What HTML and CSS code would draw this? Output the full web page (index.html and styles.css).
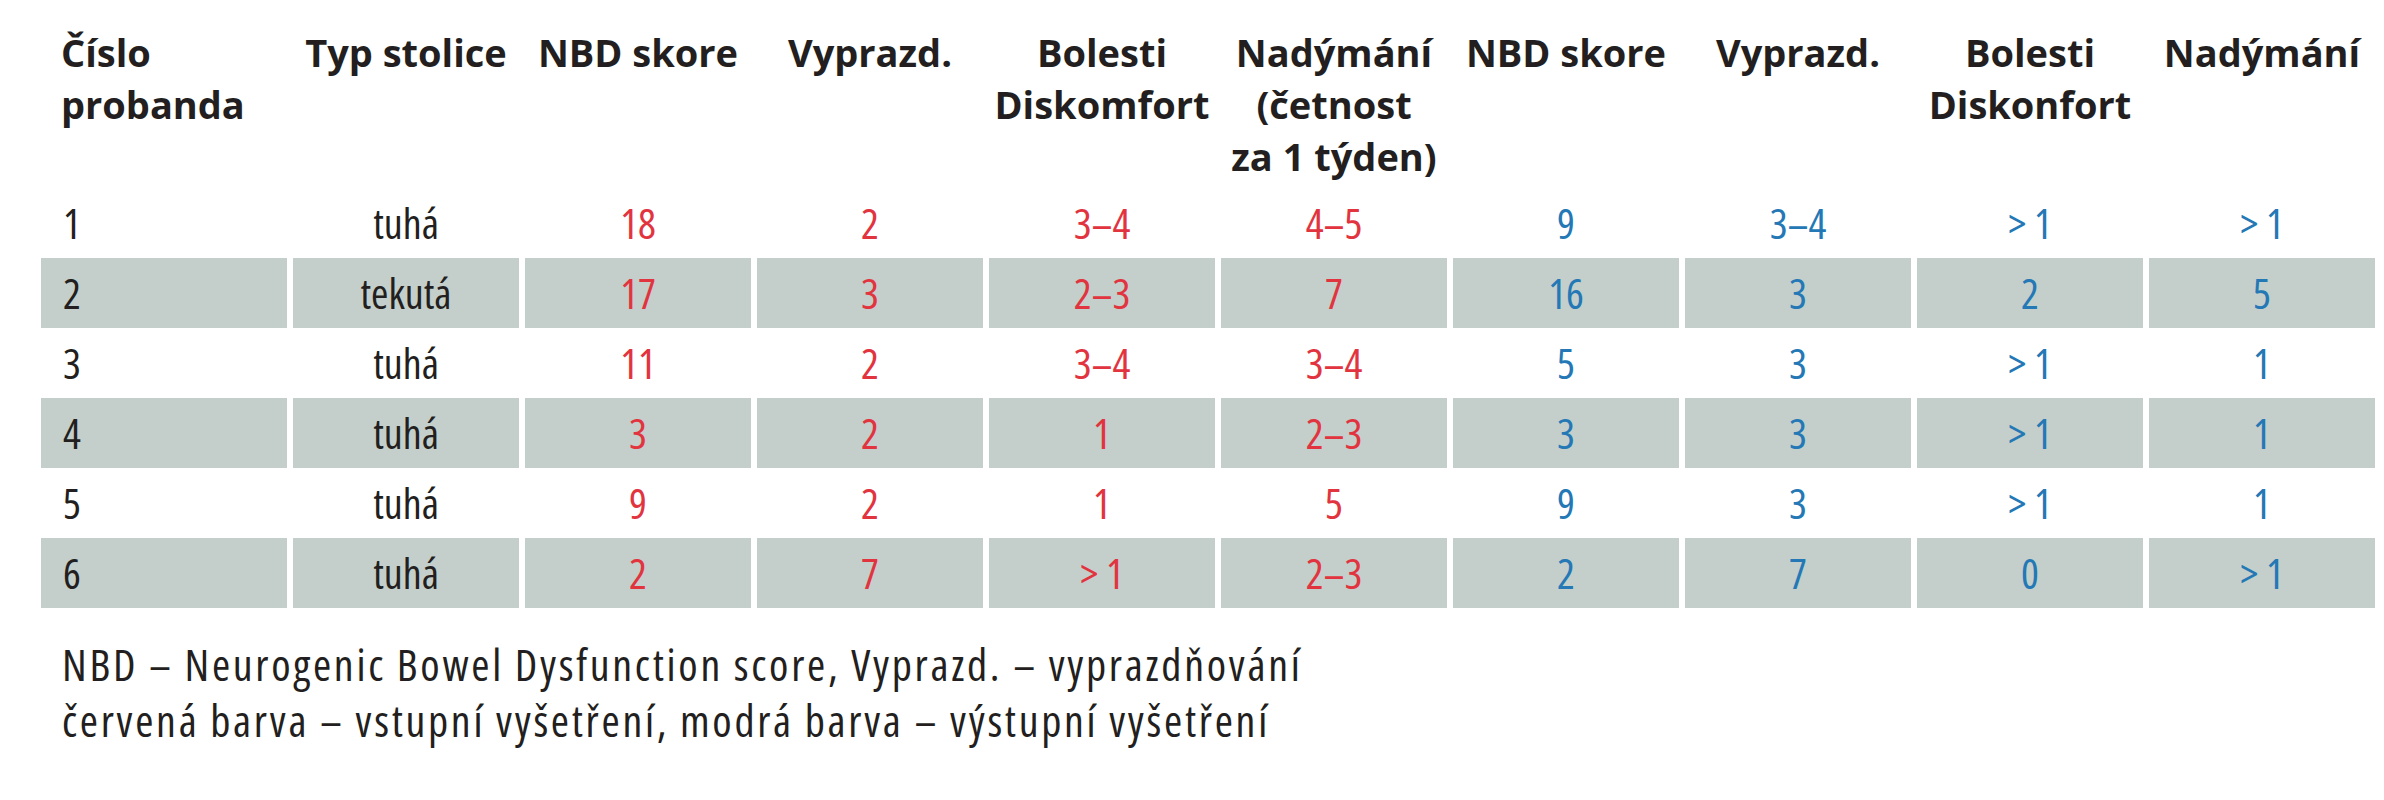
FILE: index.html
```html
<!DOCTYPE html>
<html lang="cs">
<head>
<meta charset="utf-8">
<title>Tabulka</title>
<link rel="stylesheet" href="styles.css">
</head>
<body>
<div class="page">
  <table class="data">
    <thead>
      <tr>
        <th class="first">Číslo<br>probanda</th>
        <th>Typ stolice</th>
        <th>NBD skore</th>
        <th>Vyprazd.</th>
        <th>Bolesti<br>Diskomfort</th>
        <th>Nadýmání<br>(četnost<br>za 1 týden)</th>
        <th>NBD skore</th>
        <th>Vyprazd.</th>
        <th>Bolesti<br>Diskonfort</th>
        <th>Nadýmání</th>
      </tr>
    </thead>
    <tbody>
      <tr>
        <td class="first">1</td><td>tuhá</td>
        <td class="in">18</td><td class="in">2</td><td class="in">3–4</td><td class="in">4–5</td>
        <td class="out">9</td><td class="out">3–4</td><td class="out">&gt; 1</td><td class="out">&gt; 1</td>
      </tr>
      <tr class="band">
        <td class="first">2</td><td>tekutá</td>
        <td class="in">17</td><td class="in">3</td><td class="in">2–3</td><td class="in">7</td>
        <td class="out">16</td><td class="out">3</td><td class="out">2</td><td class="out">5</td>
      </tr>
      <tr>
        <td class="first">3</td><td>tuhá</td>
        <td class="in">11</td><td class="in">2</td><td class="in">3–4</td><td class="in">3–4</td>
        <td class="out">5</td><td class="out">3</td><td class="out">&gt; 1</td><td class="out">1</td>
      </tr>
      <tr class="band">
        <td class="first">4</td><td>tuhá</td>
        <td class="in">3</td><td class="in">2</td><td class="in">1</td><td class="in">2–3</td>
        <td class="out">3</td><td class="out">3</td><td class="out">&gt; 1</td><td class="out">1</td>
      </tr>
      <tr>
        <td class="first">5</td><td>tuhá</td>
        <td class="in">9</td><td class="in">2</td><td class="in">1</td><td class="in">5</td>
        <td class="out">9</td><td class="out">3</td><td class="out">&gt; 1</td><td class="out">1</td>
      </tr>
      <tr class="band">
        <td class="first">6</td><td>tuhá</td>
        <td class="in">2</td><td class="in">7</td><td class="in">&gt; 1</td><td class="in">2–3</td>
        <td class="out">2</td><td class="out">7</td><td class="out">0</td><td class="out">&gt; 1</td>
      </tr>
    </tbody>
  </table>
  <div class="notes">
    <p>NBD – Neurogenic Bowel Dysfunction score, Vyprazd. – vyprazdňování</p>
    <p>červená barva – vstupní vyšetření, modrá barva – výstupní vyšetření</p>
  </div>
</div>
</body>
</html>
```
FILE: styles.css
```css
html, body {
  margin: 0;
  padding: 0;
  background: #ffffff;
}

.page {
  padding: 26px 0 0 35px;
  font-family: "Open Sans", "Noto Sans", sans-serif;
  color: #231f20;
}

.data {
  border-collapse: separate;
  border-spacing: 6px 0;
  table-layout: fixed;
  width: 2326px;
}

.data th {
  width: 226px;
  padding: 0 0 6px;
  vertical-align: top;
  text-align: center;
  font-size: 38px;
  font-weight: 700;
  line-height: 52px;
  color: #231f20;
}

.data td {
  height: 70px;
  padding: 0;
  vertical-align: middle;
  text-align: center;
  font-size: 42px;
  font-weight: 400;
  font-stretch: 75%;
  line-height: 56px;
  color: #231f20;
}

.data th.first,
.data td.first {
  text-align: left;
  padding-left: 20px;
}

.data td.first {
  padding-left: 22px;
}

.data td.in {
  color: #e2343f;
}

.data td.out {
  color: #2378b5;
}

.data tr.band td {
  background: #c4cfcb;
}

.notes {
  margin: 28px 0 0 27px;
  font-size: 44px;
  font-stretch: 75%;
  letter-spacing: 2.7px;
  line-height: 56px;
  color: #231f20;
}

.notes p {
  margin: 0;
}
```
